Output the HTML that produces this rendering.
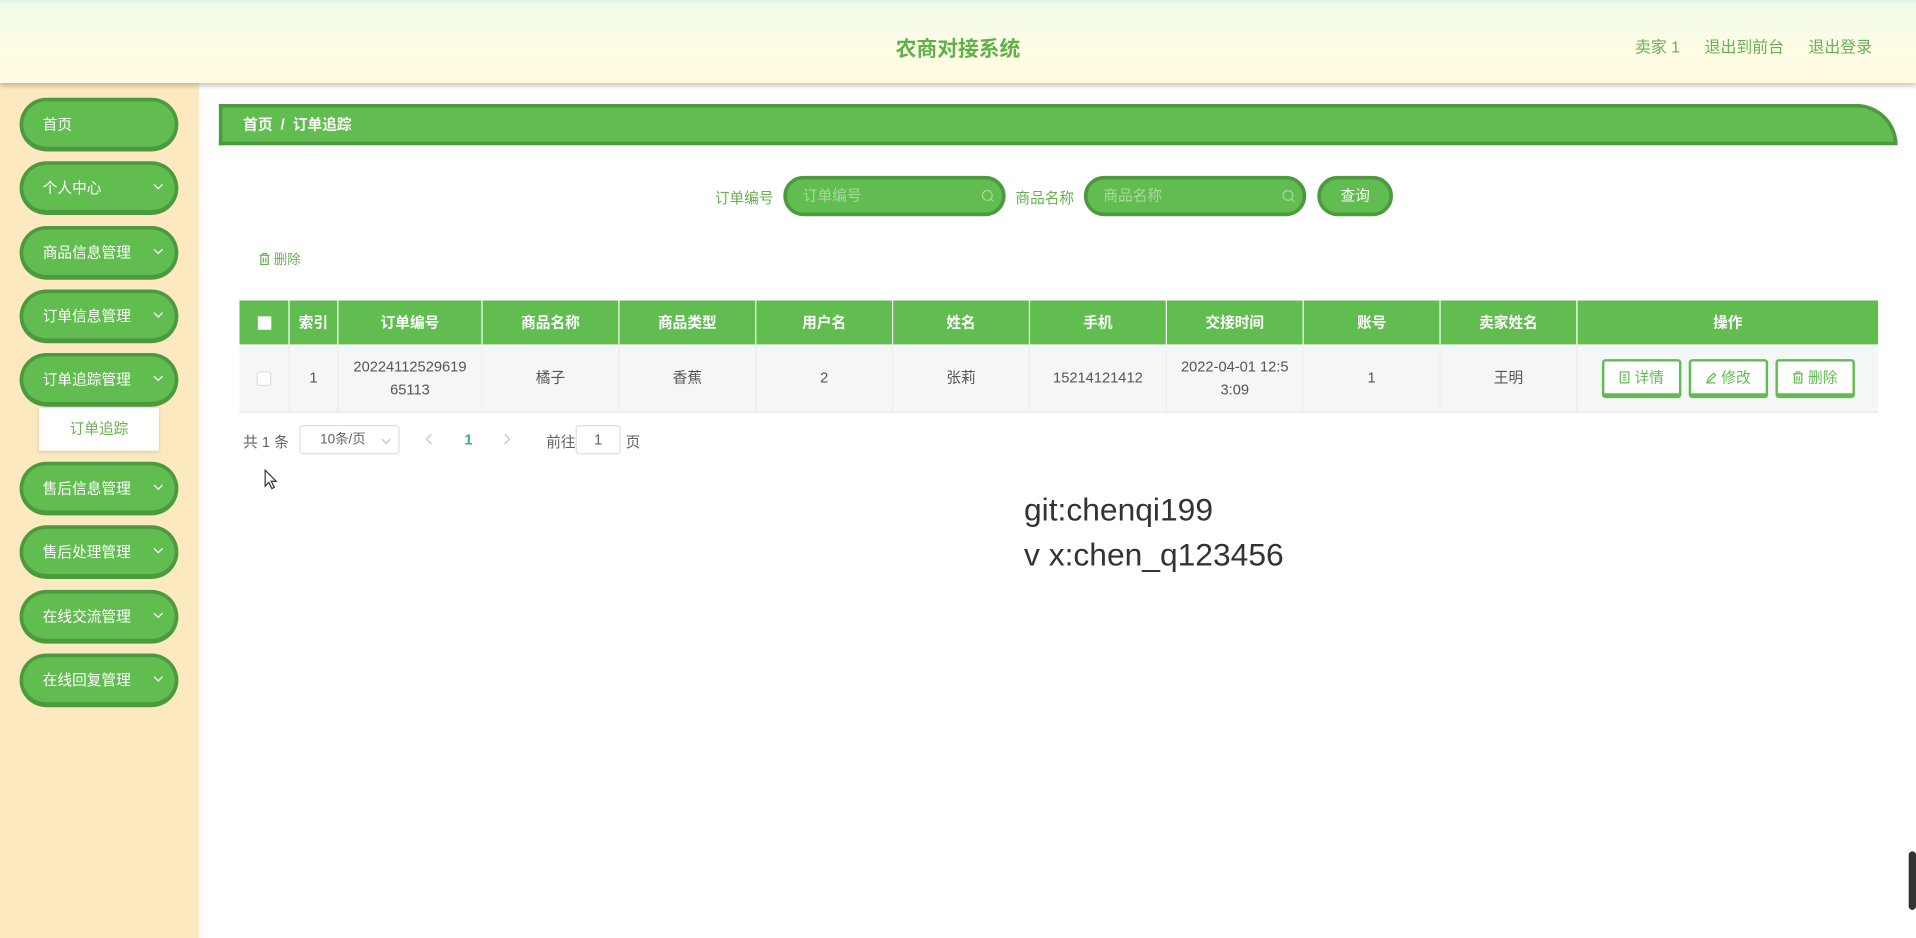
<!DOCTYPE html>
<html><head><meta charset="utf-8"><style>
*{margin:0;padding:0;box-sizing:border-box}
html,body{width:1916px;height:938px;overflow:hidden;background:#fff;font-family:"Liberation Sans","Noto Sans CJK SC",sans-serif}
#w{position:absolute;left:0;top:0;width:1568px;height:768px;transform:scale(1.22194,1.2214);transform-origin:0 0}
.a{position:absolute}
.hdr{left:0;top:0;width:1568px;height:68px;background:linear-gradient(180deg,#eefbe9 0%,#fffde6 60%,#fffbe0 100%);box-shadow:0 2px 4px rgba(0,0,0,.25);border-top:2px solid #e3f3ea;z-index:2}
.side{left:0;top:68px;width:163px;height:700px;background:#fde9bf}
.mi{left:16px;width:130px;height:44px;border-radius:22px;background:#62bd51;border:3px solid #4c9a3d;border-bottom-width:4px;color:#fff;font-size:12px;line-height:38px;padding-left:16px}
.mi svg{position:absolute;right:9px;top:15px}
.bc{left:179px;top:85px;width:1374px;height:34px;background:#62bd51;border:3px solid #4c9a3d;border-radius:0 34px 0 0;color:#fff;font-size:12px;line-height:28px;padding-left:17px;font-weight:bold}
.lbl{font-size:12px;color:#68b050}
.inp{height:33px;border-radius:17px;background:#62bd51;border:3px solid #4c9a3d;color:#a9d99c;font-size:12px;line-height:27px;padding-left:13px}
.inp svg{position:absolute;right:6px;top:8px}
.th{top:246px;height:36px;background:#62bd51;color:#fff;font-size:12px;font-weight:bold;line-height:36px;text-align:center;border-right:1px solid #fff}
.td{top:282px;height:56px;background:#f5f6f7;color:#555;font-size:12px;text-align:center;border-right:1px solid #ececec;display:flex;align-items:center;justify-content:center;line-height:19px;border-bottom:1px solid #e8e8e8}
.ob{top:294px;height:32px;border:2px solid #62bd51;border-bottom-width:4px;border-radius:3px;background:#fff;color:#62bd51;font-size:12px;line-height:26px;text-align:center;width:65px}
</style></head><body><div id="w">
<div class="a hdr"><div class="a" style="left:0;width:1568px;top:24px;text-align:center;font-size:17px;font-weight:bold;color:#5fb14a">农商对接系统</div>
<div class="a" style="left:1338px;top:26px;font-size:13px;color:#6aaf55">卖家 1</div>
<div class="a" style="left:1395px;top:26px;font-size:13px;color:#6aaf55">退出到前台</div>
<div class="a" style="left:1480px;top:26px;font-size:13px;color:#6aaf55">退出登录</div></div>
<div class="a side"></div>
<div class="a mi" style="top:80px">首页</div>
<div class="a mi" style="top:132px">个人中心<svg width="9" height="6"><path d="M1 1L4.5 4.5L8 1" fill="none" stroke="#fff" stroke-width="1"/></svg></div>
<div class="a mi" style="top:185px">商品信息管理<svg width="9" height="6"><path d="M1 1L4.5 4.5L8 1" fill="none" stroke="#fff" stroke-width="1"/></svg></div>
<div class="a mi" style="top:237px">订单信息管理<svg width="9" height="6"><path d="M1 1L4.5 4.5L8 1" fill="none" stroke="#fff" stroke-width="1"/></svg></div>
<div class="a mi" style="top:289px">订单追踪管理<svg width="9" height="6"><path d="M1 1L4.5 4.5L8 1" fill="none" stroke="#fff" stroke-width="1"/></svg></div>
<div class="a" style="left:32px;top:334px;width:98px;height:35px;background:#fff;box-shadow:0 1px 3px rgba(0,0,0,.15);font-size:12px;color:#68b050;text-align:center;line-height:35px">订单追踪</div>
<div class="a mi" style="top:378px">售后信息管理<svg width="9" height="6"><path d="M1 1L4.5 4.5L8 1" fill="none" stroke="#fff" stroke-width="1"/></svg></div>
<div class="a mi" style="top:430px">售后处理管理<svg width="9" height="6"><path d="M1 1L4.5 4.5L8 1" fill="none" stroke="#fff" stroke-width="1"/></svg></div>
<div class="a mi" style="top:483px">在线交流管理<svg width="9" height="6"><path d="M1 1L4.5 4.5L8 1" fill="none" stroke="#fff" stroke-width="1"/></svg></div>
<div class="a mi" style="top:535px">在线回复管理<svg width="9" height="6"><path d="M1 1L4.5 4.5L8 1" fill="none" stroke="#fff" stroke-width="1"/></svg></div>
<div class="a bc">首页 &nbsp;/&nbsp; 订单追踪</div>
<div class="a lbl" style="left:585px;top:153px">订单编号</div>
<div class="a inp" style="left:641px;top:144px;width:182px">订单编号<svg width="11" height="11"><circle cx="5" cy="5" r="4" fill="none" stroke="#a9d99c"/><path d="M8 8L10 10" stroke="#a9d99c"/></svg></div>
<div class="a lbl" style="left:831px;top:153px">商品名称</div>
<div class="a inp" style="left:887px;top:144px;width:182px">商品名称<svg width="11" height="11"><circle cx="5" cy="5" r="4" fill="none" stroke="#a9d99c"/><path d="M8 8L10 10" stroke="#a9d99c"/></svg></div>
<div class="a inp" style="left:1078px;top:144px;width:62px;color:#fff;padding:0;text-align:center">查询</div>
<div class="a" style="left:212px;top:204px;font-size:11px;color:#6aaf55"><svg width="9" height="10" style="vertical-align:-1px"><path d="M0.5 2H8.5M3 2V0.5H6V2M1.5 2V9.5H7.5V2M3.5 4V8M5.5 4V8" fill="none" stroke="#6aaf55" stroke-width="1"/></svg> 删除</div>
<div class="a th" style="left:196px;width:41px"><span style="display:inline-block;width:11px;height:11px;background:#fff;vertical-align:middle"></span></div>
<div class="a th" style="left:237px;width:40px">索引</div>
<div class="a th" style="left:277px;width:118px">订单编号</div>
<div class="a th" style="left:395px;width:112px">商品名称</div>
<div class="a th" style="left:507px;width:112px">商品类型</div>
<div class="a th" style="left:619px;width:112px">用户名</div>
<div class="a th" style="left:731px;width:112px">姓名</div>
<div class="a th" style="left:843px;width:112px">手机</div>
<div class="a th" style="left:955px;width:112px">交接时间</div>
<div class="a th" style="left:1067px;width:112px">账号</div>
<div class="a th" style="left:1179px;width:112px">卖家姓名</div>
<div class="a th" style="left:1291px;width:246px;border:0">操作</div>
<div class="a td" style="left:196px;width:41px"><span style="display:inline-block;width:12px;height:12px;background:#fff;border:1px solid #ddd;border-radius:2px"></span></div>
<div class="a td" style="left:237px;width:40px">1</div>
<div class="a td" style="left:277px;width:118px">20224112529619<br>65113</div>
<div class="a td" style="left:395px;width:112px">橘子</div>
<div class="a td" style="left:507px;width:112px">香蕉</div>
<div class="a td" style="left:619px;width:112px">2</div>
<div class="a td" style="left:731px;width:112px">张莉</div>
<div class="a td" style="left:843px;width:112px">15214121412</div>
<div class="a td" style="left:955px;width:112px">2022-04-01 12:5<br>3:09</div>
<div class="a td" style="left:1067px;width:112px">1</div>
<div class="a td" style="left:1179px;width:112px">王明</div>
<div class="a td" style="left:1291px;width:246px;border:0;border-bottom:1px solid #e8e8e8"></div>
<div class="a ob" style="left:1311px"><svg width="9" height="10" style="vertical-align:-1px"><path d="M1 0.5H8V9.5H1ZM3 3H6M3 5H6M3 7H6" fill="none" stroke="#62bd51"/></svg> 详情</div>
<div class="a ob" style="left:1382px"><svg width="9" height="10" style="vertical-align:-1px"><path d="M1 9L2 6L6.5 1.5L8 3L3.5 7.5ZM1 9.5H8" fill="none" stroke="#62bd51"/></svg> 修改</div>
<div class="a ob" style="left:1453px"><svg width="9" height="10" style="vertical-align:-1px"><path d="M0.5 2H8.5M3 2V0.5H6V2M1.5 2V9.5H7.5V2M3.5 4V8M5.5 4V8" fill="none" stroke="#62bd51"/></svg> 删除</div>
<div class="a" style="left:199px;top:353px;font-size:12px;color:#606266">共 1 条</div>
<div class="a" style="left:245px;top:348px;width:82px;height:24px;border:1px solid #dcdfe6;border-radius:3px;font-size:11px;color:#606266;line-height:22px;padding-left:16px">10条/页 <svg width="8" height="5" style="position:absolute;right:6px;top:10px"><path d="M0.5 0.5L4 4L7.5 0.5" fill="none" stroke="#c0c4cc"/></svg></div>
<svg class="a" style="left:348px;top:355px" width="6" height="9"><path d="M5 0.5L1 4.5L5 8.5" fill="none" stroke="#c0c4cc"/></svg>
<div class="a" style="left:380px;top:353px;font-size:12px;color:#3dae7a;font-weight:bold">1</div>
<svg class="a" style="left:412px;top:355px" width="6" height="9"><path d="M1 0.5L5 4.5L1 8.5" fill="none" stroke="#c0c4cc"/></svg>
<div class="a" style="left:447px;top:353px;font-size:12px;color:#606266">前往</div>
<div class="a" style="left:471px;top:348px;width:37px;height:24px;border:1px solid #dcdfe6;border-radius:3px;font-size:12px;color:#606266;line-height:22px;text-align:center">1</div>
<div class="a" style="left:512px;top:353px;font-size:12px;color:#606266">页</div>
<div class="a" style="left:838px;top:399px;font-size:26px;color:#333;line-height:37px">git:chenqi199<br>v x:chen_q123456</div>
<svg class="a" style="left:216px;top:384px" width="12" height="18" viewBox="0 0 12 18"><path d="M1 1 L1 14 L4 11 L6.5 16 L8.5 15 L6 10 L10 10 Z" fill="#fff" stroke="#333" stroke-width="1"/></svg>
<div class="a" style="left:1562px;top:697px;width:6px;height:48px;background:#333;border-radius:3px"></div>
</div></body></html>
